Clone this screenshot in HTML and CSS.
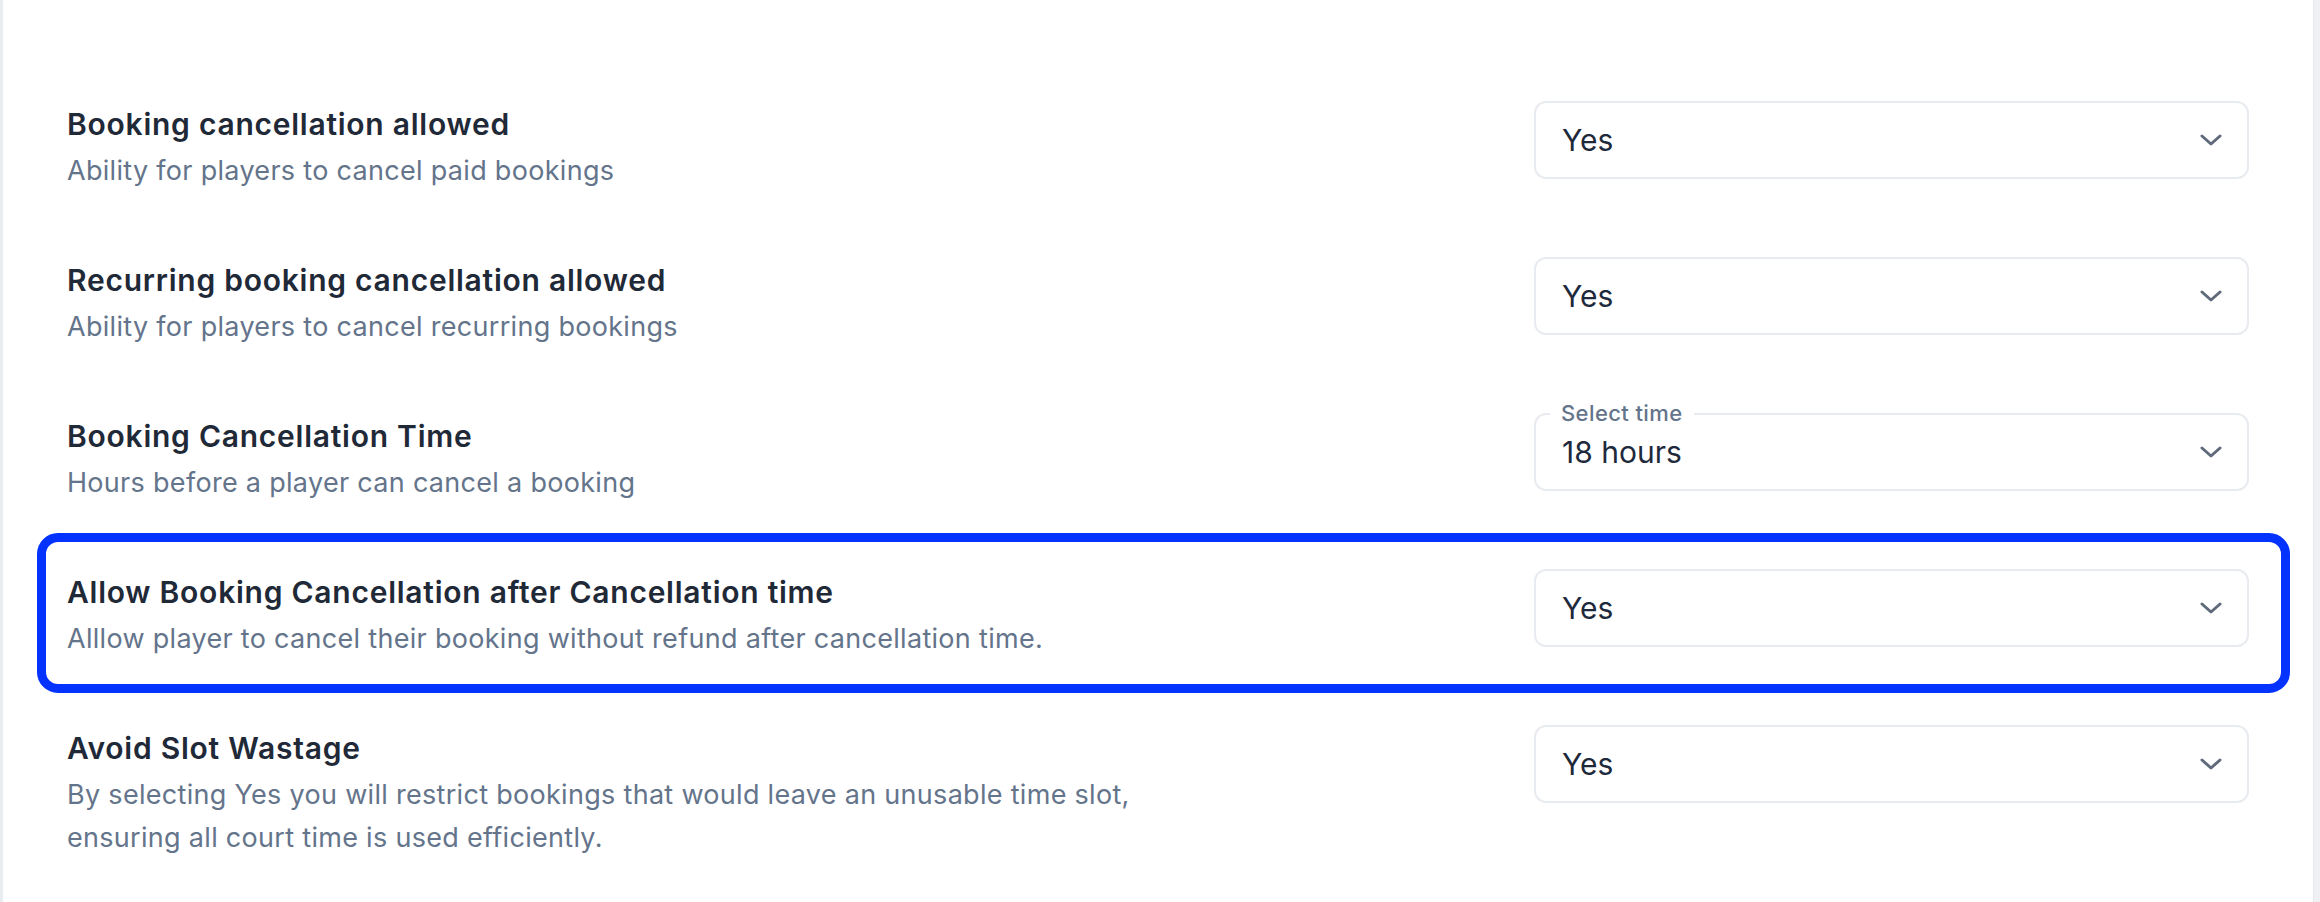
FILE: index.html
```html
<!DOCTYPE html>
<html lang="en">
<head>
<meta charset="utf-8">
<title>Booking settings</title>
<link rel="stylesheet" href="styles.css">
</head>
<body>
<div class="page">
  <main class="panel">
    <div class="settings">
      <div class="row">
        <div class="info">
          <div class="title">Booking cancellation allowed</div>
          <div class="desc">Ability for players to cancel paid bookings</div>
        </div>
        <div class="select">
          <span class="value">Yes</span>
          <svg class="chev" width="22" height="12" viewBox="0 0 22 12"><path d="M2 2 L11 10 L20 2" fill="none" stroke="#5f6b7a" stroke-width="3" stroke-linecap="round" stroke-linejoin="round"/></svg>
        </div>
      </div>
      <div class="row">
        <div class="info">
          <div class="title">Recurring booking cancellation allowed</div>
          <div class="desc">Ability for players to cancel recurring bookings</div>
        </div>
        <div class="select">
          <span class="value">Yes</span>
          <svg class="chev" width="22" height="12" viewBox="0 0 22 12"><path d="M2 2 L11 10 L20 2" fill="none" stroke="#5f6b7a" stroke-width="3" stroke-linecap="round" stroke-linejoin="round"/></svg>
        </div>
      </div>
      <div class="row">
        <div class="info">
          <div class="title">Booking Cancellation Time</div>
          <div class="desc">Hours before a player can cancel a booking</div>
        </div>
        <div class="select labelled">
          <span class="float-label">Select time</span>
          <span class="value">18 hours</span>
          <svg class="chev" width="22" height="12" viewBox="0 0 22 12"><path d="M2 2 L11 10 L20 2" fill="none" stroke="#5f6b7a" stroke-width="3" stroke-linecap="round" stroke-linejoin="round"/></svg>
        </div>
      </div>
      <div class="row highlighted">
        <div class="info">
          <div class="title">Allow Booking Cancellation after Cancellation time</div>
          <div class="desc">Alllow player to cancel their booking without refund after cancellation time.</div>
        </div>
        <div class="select">
          <span class="value">Yes</span>
          <svg class="chev" width="22" height="12" viewBox="0 0 22 12"><path d="M2 2 L11 10 L20 2" fill="none" stroke="#5f6b7a" stroke-width="3" stroke-linecap="round" stroke-linejoin="round"/></svg>
        </div>
      </div>
      <div class="row">
        <div class="info">
          <div class="title">Avoid Slot Wastage</div>
          <div class="desc wrap">By selecting Yes you will restrict bookings that would leave an unusable time slot, ensuring all court time is used efficiently.</div>
        </div>
        <div class="select">
          <span class="value">Yes</span>
          <svg class="chev" width="22" height="12" viewBox="0 0 22 12"><path d="M2 2 L11 10 L20 2" fill="none" stroke="#5f6b7a" stroke-width="3" stroke-linecap="round" stroke-linejoin="round"/></svg>
        </div>
      </div>
    </div>
  </main>
  <div class="scrollbar"></div>
</div>
</body>
</html>
```
FILE: styles.css
```css
* { box-sizing: border-box; }
html, body {
  margin: 0;
  padding: 0;
  background: #ffffff;
}
body {
  font-family: Inter, "Noto Sans", sans-serif;
  width: 2320px;
  height: 902px;
  overflow: hidden;
}
.page {
  display: flex;
  height: 902px;
}
.panel {
  flex: 1;
  border-left: 3px solid #e9ecf0;
  background: #ffffff;
}
.scrollbar {
  width: 7px;
  background: #eef0f3;
  border-left: 1px solid #e4e7eb;
}
.settings {
  display: flex;
  flex-direction: column;
  gap: 65px;
  padding: 101px 64px 0 64px;
}
.row {
  position: relative;
  display: flex;
  justify-content: space-between;
  align-items: flex-start;
}
.row.highlighted::before {
  content: "";
  position: absolute;
  top: -36px;
  bottom: -33px;
  left: -30px;
  right: -41px;
  border: 9px solid #0433ff;
  border-radius: 21px;
  pointer-events: none;
}
.info {
  margin-top: 2px;
}
.title {
  font-size: 30px;
  line-height: 42px;
  font-weight: 600;
  letter-spacing: 0.75px;
  color: #1f2937;
  margin-bottom: 4px;
}
.desc {
  font-size: 27px;
  line-height: 43px;
  font-weight: 400;
  letter-spacing: 0.3px;
  color: #64748b;
}
.desc.wrap {
  max-width: 1110px;
}
.select {
  position: relative;
  flex: 0 0 715px;
  width: 715px;
  height: 78px;
  border: 2px solid #e8ebef;
  border-radius: 12px;
  display: flex;
  align-items: center;
  justify-content: space-between;
  padding: 0 25px 0 26px;
}
.value {
  font-size: 30px;
  color: #1e293b;
  font-weight: 400;
}
.chev {
  display: block;
}
.float-label {
  position: absolute;
  top: -16px;
  left: 14px;
  padding: 0 11px;
  background: #ffffff;
  font-size: 22px;
  line-height: 28px;
  font-weight: 500;
  letter-spacing: 0.4px;
  color: #64748b;
}
```
